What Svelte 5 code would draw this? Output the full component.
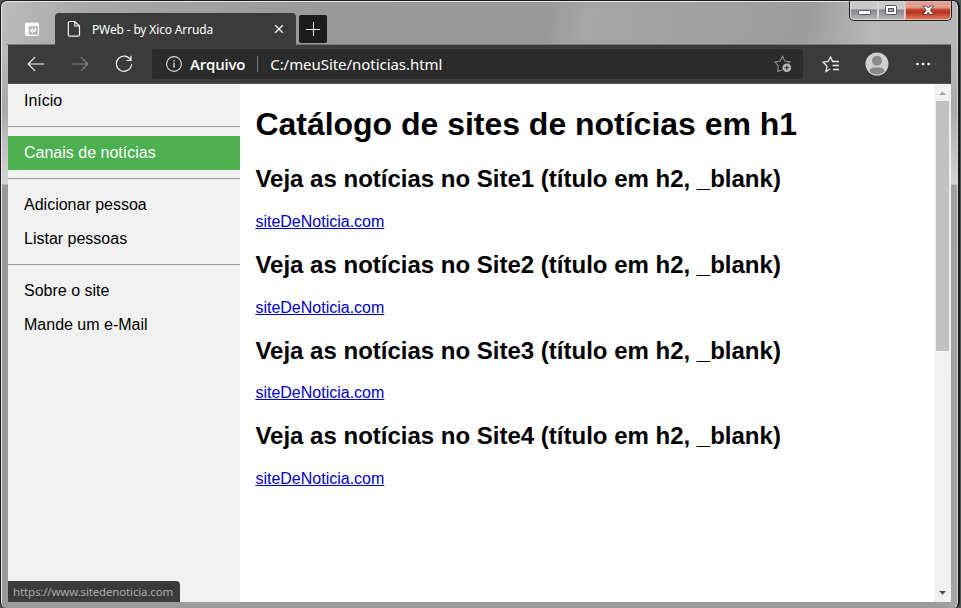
<script>
  const groups = [
    [{ label: 'Início' }],
    [{ label: 'Canais de notícias', active: true }],
    [{ label: 'Adicionar pessoa' }, { label: 'Listar pessoas' }],
    [{ label: 'Sobre o site' }, { label: 'Mande um e-Mail' }]
  ];
  const sites = [1, 2, 3, 4];
</script>

<div class="desktop">
  <div class="window">
    <header class="titlebar">
      <svg class="tabs-icon" width="16" height="16" viewBox="0 0 16 16">
        <rect x="1.6" y="2" width="12.8" height="12.4" rx="1.6" fill="none" stroke="#fff" stroke-width="1.1" />
        <path d="M1.5 3h13M1.5 4.500h13" stroke="#fff" stroke-width="1.6" />
        <path d="M3.2 5v9" stroke="#fff" stroke-width="3" />
        <path d="M11.400 7v2.800H7M9 7.600 6.800 9.800 9 12" fill="none" stroke="#fff" stroke-width="1.4" />
      </svg>
      <div class="tab">
        <svg width="14" height="18" viewBox="0 0 14 18" fill="none" stroke="#f4f4f4" stroke-width="1.2">
          <path d="M2.8 1.5h5L12.5 6v8.700q0 1.500-1.500 1.500H2.800q-1.500 0-1.500-1.500V3q0-1.500 1.500-1.500zM7.800 1.500V6h4.700" />
        </svg>
        <span class="tab-title">PWeb - by Xico Arruda</span>
        <svg class="tab-close" width="10" height="10" viewBox="0 0 10 10" stroke="#f4f4f4" stroke-width="1.3"><path d="M1.200 1.200l7.600 7.600M8.800 1.200 1.200 8.800" /></svg>
      </div>
      <div class="new-tab">
        <svg width="14" height="14" viewBox="0 0 14 14" stroke="#f0f0f0"><path d="M0 7.500h14M7.500 0v14" /></svg>
      </div>
      <div class="controls">
        <div class="control min">
          <svg width="13" height="6" viewBox="0 0 13 6"><rect x=".5" y=".5" width="12" height="4" rx="1" fill="#fff" stroke="#535666" /></svg>
        </div>
        <div class="control max">
          <svg width="13" height="11" viewBox="0 0 13 11"><rect x=".5" y=".5" width="11" height="9" rx="1" fill="#fff" stroke="#535666" /><rect x="3.500" y="3.500" width="5" height="3" fill="#a0a0a8" stroke="#535666" /></svg>
        </div>
        <div class="control close">
          <svg width="13" height="11" viewBox="0 0 13 11"><path d="M1 1h3.500l1.700 2L8 1h3.500L8.300 5.200l3.400 4.300H8L6.200 7.300 4.400 9.500H.8l3.400-4.300z" fill="#fff" stroke="#6a3b3b" stroke-width=".9" /></svg>
        </div>
      </div>
    </header>

    <nav class="toolbar">
      <svg class="back" width="18" height="16" viewBox="0 0 18 16" fill="none" stroke="#f0f0f0" stroke-width="1.2"><path d="M17 8H1.500M8 1.200 1.200 8 8 14.800" /></svg>
      <svg class="forward" width="18" height="16" viewBox="0 0 18 16" fill="none" stroke="#828282" stroke-width="1.2"><path d="M1 8h15.500M10 1.200 16.800 8 10 14.800" /></svg>
      <svg class="reload" width="18" height="18" viewBox="0 0 18 18" fill="none" stroke="#f0f0f0" stroke-width="1.2"><path d="M15.800 5.300A7.600 7.600 0 1 0 16.600 9M16 .8v4.700h-4.700" /></svg>
      <div class="address">
        <svg class="info" width="18" height="18" viewBox="0 0 18 18" fill="none" stroke="#d8d8d8"><circle cx="9" cy="9" r="7.400" stroke-width="1.100" /><path d="M9 7.800v5M9 5v1.500" stroke-width="1.400" /></svg>
        <span class="scheme">Arquivo</span>
        <span class="divider"></span>
        <span class="url">C:/meuSite/noticias.html</span>
        <svg class="add-star" width="19" height="18" viewBox="0 0 19 18" fill="none" stroke="#929292" stroke-width="1.100">
          <path d="M8 15 3.700 16.500l.6-5.600L1 6.900l5.200-.8L8.500 1.200l2.300 4.900 5.200.8-1.900 1.500" />
          <circle cx="12.800" cy="12.700" r="4.300" fill="#bcbcbc" stroke="none" />
          <path d="M12.800 10.200v5M10.300 12.700h5" stroke="#2b2b2b" />
        </svg>
      </div>
      <svg class="favorites" width="18" height="17" viewBox="0 0 18 17" fill="none" stroke="#f0f0f0" stroke-width="1.300"><path d="M8 13 4 15.500l1-5.400L1.200 6.200l5-.7L8.500 1l2.100 4.500H17M10.500 9.500H17M11 13.500h6" /></svg>
      <svg class="avatar" width="24" height="24" viewBox="0 0 24 24"><circle cx="12" cy="12" r="11.500" fill="#d2d0ce" /><circle cx="12" cy="8.800" r="5" fill="#8a8886" /><path d="M4.500 19.200q1-3.700 4.500-3.700h6q3.500 0 4.500 3.700A10.500 10.500 0 0 1 4.500 19.200" fill="#8a8886" /></svg>
      <svg class="more" width="14" height="4" viewBox="0 0 14 4" fill="#fff"><circle cx="1.500" cy="2" r="1.300" /><circle cx="7" cy="2" r="1.300" /><circle cx="12.500" cy="2" r="1.300" /></svg>
    </nav>

    <div class="viewport">
      <aside>
        {#each groups as group, i}
          {#if i > 0}<hr />{/if}
          {#each group as item}
            <div class="item" class:active={item.active}>{item.label}</div>
          {/each}
        {/each}
      </aside>
      <main>
        <h1>Catálogo de sites de notícias em h1</h1>
        {#each sites as n}
          <section>
            <h2>Veja as notícias no Site{n} (título em h2, _blank)</h2>
            <p><span class="link">siteDeNoticia.com</span></p>
          </section>
        {/each}
      </main>
      <div class="scrollbar">
        <svg width="17" height="17" viewBox="0 0 17 17"><path d="M5 11h7L8.500 7.500z" fill="#a3a3a3" /></svg>
        <div class="thumb"></div>
        <svg class="down" width="17" height="17" viewBox="0 0 17 17"><path d="M5 6h7L8.500 9.700z" fill="#505050" /></svg>
      </div>
      <div class="status">https://www.sitedenoticia.com</div>
    </div>
  </div>
</div>

<style>
  :global(body) { margin: 0; overflow: hidden; }
  .desktop { width: 961px; height: 608px; background: #4f5553; overflow: hidden; }
  .desktop, .desktop * { box-sizing: border-box; }
  svg { display: block; flex: none; }
  .window {
    width: 960px; height: 608px; padding: 0 7px 4px 6px;
    border: 1px solid #1d1a1c; border-right-width: 2px; border-bottom: 0; border-radius: 7px 7px 6px 6px;
    box-shadow: inset 1px 1px #e8e8e8, inset -1px 0 #d0d0d0;
    background:
      linear-gradient(#bbb 0, #aaa 65px, #d5d5d5 138px, #989898 139px, #999 100%) 0 45px / 8px 100% no-repeat,
      linear-gradient(#b7b7b7 0, #aaa 65px, #d5d5d5 138px, #a0a0a0 139px, #a4a4a4 100%) 100% 45px / 9px 100% no-repeat,
      linear-gradient(transparent 600px, #9b9b9b 600px),
      linear-gradient(100deg, #bcbcbc 0, #a8a8a8 9%, #999 33%, #9a9a9a 57%, #a6a6a6 61%, #9c9c9c 84%, #b9b9b9 91%, #b7b7b7) 0 0 / 100% 45px no-repeat;
    font-family: "Noto Sans", sans-serif;
  }
  .titlebar { display: flex; height: 44px; padding-left: 17px; border-bottom: 1px solid #777; }
  .tabs-icon { margin-top: 20px; }
  .tab { display: flex; align-items: center; width: 241px; height: 32px; margin: 12px 0 0 15px; padding: 0 12px 0 12px; background: #3b3b3b; border-radius: 4px 4px 0 0; color: #fff; }
  .tab-title { margin-left: 11px; font-size: 12px; letter-spacing: -.15px; white-space: nowrap; }
  .tab-close { margin-left: auto; }
  .new-tab { display: grid; place-items: center; width: 28px; height: 28px; margin: 14px 0 0 3px; background: #1c1c1c; border-radius: 2px; }
  .controls { display: flex; width: 103px; height: 20px; margin-left: auto; margin-right: -1px; border: 1px solid #202020; border-top: 0; border-radius: 0 0 5px 5px; overflow: hidden; }
  .control { display: grid; place-items: center; border: 1px solid #d6d6d6; background: linear-gradient(#c9c9ca 0 42%, #85858a 46%, #b5b5b8); }
  .min { width: 28px; border-radius: 0 0 0 4px; }
  .min svg { margin-top: 4px; }
  .max { width: 27px; }
  .close { flex: 1; border-color: #e7b2a8; border-radius: 0 0 4px; background: linear-gradient(#e0a091 0 30%, #c44731 46%, #b9331e 60%, #df7660); }
  .toolbar { display: flex; align-items: center; width: 943px; height: 39px; margin-left: 1px; padding-left: 19px; background: #3b3b3b; border-bottom: 1px solid #555; color: #fff; }
  .forward { margin-left: 26px; }
  .reload { margin-left: 26px; }
  .address { display: flex; align-items: center; width: 651px; height: 30px; margin-left: 19px; padding: 0 10px 0 13px; background: #2b2b2b; border-radius: 3px; font-size: 15px; white-space: nowrap; }
  .scheme { margin-left: 7px; font-family: "Open Sans", sans-serif; font-weight: 600; letter-spacing: -.2px; }
  .divider { width: 1px; height: 16px; margin: 0 12px; background: #777; }
  .url { letter-spacing: -.05px; }
  .add-star { margin-left: auto; }
  .favorites { margin-left: 19px; }
  .avatar { margin-left: 25px; }
  .more { margin-left: 27px; }
  .viewport { display: flex; width: 943px; height: 518px; position: relative; margin-left: 1px; background: #fff; font-family: "Liberation Sans", Arial, sans-serif; color: #000; }
  aside { width: 232px; background: #f1f1f1; }
  .item { height: 34px; padding: 8px 16px; font-size: 16px; line-height: 18px; }
  .active { background: #4caf50; color: #fff; }
  hr { height: 2px; margin: 8px 0; border: 0; border-top: 1px solid #999; border-bottom: 1px solid #eee; }
  main { flex: 1; padding: 22px 15px 0 15.4px; }
  h1 { margin: 0 0 23.3px; font-size: 32px; line-height: 36px; letter-spacing: -.02px; }
  section { height: 85.67px; }
  h2 { margin: 0 0 19.7px; font-size: 24px; line-height: 28px; }
  p { margin: 0; font-size: 16px; line-height: 18px; }
  .link { color: #0000c8; text-decoration: underline; }
  .scrollbar { display: flex; flex-direction: column; width: 17px; background: #f1f1f1; }
  .thumb { width: 13px; height: 250px; margin-left: 2px; background: #c1c1c1; }
  .down { margin-top: auto; }
  .status { position: absolute; left: 0; bottom: 0; width: 172px; height: 21px; padding-left: 5px; background: #3b3b3b; border-radius: 0 4px 0 0; color: #aaa; font: 11.5px/21px "Noto Sans", sans-serif; letter-spacing: -.15px; white-space: nowrap; }
</style>
